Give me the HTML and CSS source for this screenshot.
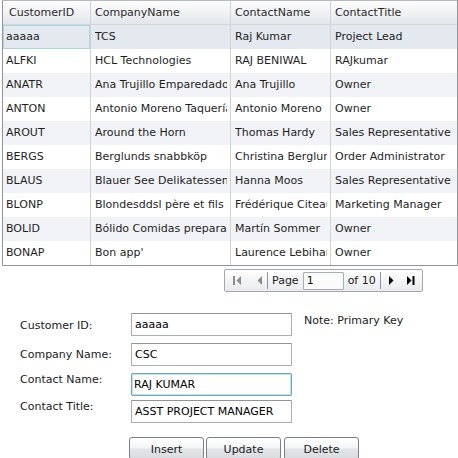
FILE: index.html
```html
<!DOCTYPE html>
<html>
<head>
<meta charset="utf-8">
<link rel="stylesheet" href="styles.css">
</head>
<body>
<div class="grid">
  <div class="row head"><div class="cell"><span class="t">CustomerID</span></div><div class="cell"><span class="t">CompanyName</span></div><div class="cell"><span class="t">ContactName</span></div><div class="cell"><span class="t">ContactTitle</span></div></div>
  <div class="row sel"><div class="cell focus"><span class="t">aaaaa</span></div><div class="cell"><span class="t">TCS</span></div><div class="cell"><span class="t">Raj Kumar</span></div><div class="cell"><span class="t">Project Lead</span></div></div>
  <div class="row"><div class="cell"><span class="t">ALFKI</span></div><div class="cell"><span class="t">HCL Technologies</span></div><div class="cell"><span class="t">RAJ BENIWAL</span></div><div class="cell"><span class="t">RAJkumar</span></div></div>
  <div class="row alt"><div class="cell"><span class="t">ANATR</span></div><div class="cell"><span class="t">Ana Trujillo Emparedados y helados</span></div><div class="cell"><span class="t">Ana Trujillo</span></div><div class="cell"><span class="t">Owner</span></div></div>
  <div class="row"><div class="cell"><span class="t">ANTON</span></div><div class="cell"><span class="t">Antonio Moreno Taquería</span></div><div class="cell"><span class="t">Antonio Moreno</span></div><div class="cell"><span class="t">Owner</span></div></div>
  <div class="row alt"><div class="cell"><span class="t">AROUT</span></div><div class="cell"><span class="t">Around the Horn</span></div><div class="cell"><span class="t">Thomas Hardy</span></div><div class="cell"><span class="t">Sales Representative</span></div></div>
  <div class="row"><div class="cell"><span class="t">BERGS</span></div><div class="cell"><span class="t">Berglunds snabbköp</span></div><div class="cell"><span class="t">Christina Berglund</span></div><div class="cell"><span class="t">Order Administrator</span></div></div>
  <div class="row alt"><div class="cell"><span class="t">BLAUS</span></div><div class="cell"><span class="t">Blauer See Delikatessen</span></div><div class="cell"><span class="t">Hanna Moos</span></div><div class="cell"><span class="t">Sales Representative</span></div></div>
  <div class="row"><div class="cell"><span class="t">BLONP</span></div><div class="cell"><span class="t">Blondesddsl père et fils</span></div><div class="cell"><span class="t">Frédérique Citeaux</span></div><div class="cell"><span class="t">Marketing Manager</span></div></div>
  <div class="row alt"><div class="cell"><span class="t">BOLID</span></div><div class="cell"><span class="t">Bólido Comidas preparadas</span></div><div class="cell"><span class="t">Martín Sommer</span></div><div class="cell"><span class="t">Owner</span></div></div>
  <div class="row"><div class="cell"><span class="t">BONAP</span></div><div class="cell"><span class="t">Bon app'</span></div><div class="cell"><span class="t">Laurence Lebihan</span></div><div class="cell"><span class="t">Owner</span></div></div>
</div>

<div class="pager">
  <svg class="ic first" width="9" height="9" viewBox="0 0 9 9"><rect x="0" y="0" width="2" height="9" fill="#8c8c8c"/><polygon points="8,0 8,9 3.5,4.5" fill="#8c8c8c"/></svg>
  <svg class="ic prev" width="5" height="9" viewBox="0 0 5 9"><polygon points="5,0 5,9 0.5,4.5" fill="#8c8c8c"/></svg>
  <span class="sep"></span>
  <span class="ptext">Page</span>
  <span class="pinput">1</span>
  <span class="ptext of">of 10</span>
  <span class="sep sep2"></span>
  <svg class="ic next" width="5" height="9" viewBox="0 0 5 9"><polygon points="0,0 0,9 4.5,4.5" fill="#000"/></svg>
  <svg class="ic last" width="8" height="9" viewBox="0 0 8 9"><polygon points="0,0 0,9 4.5,4.5" fill="#000"/><rect x="5.5" y="0" width="2" height="9" fill="#000"/></svg>
</div>

<div class="form">
  <div class="frow r1"><span class="label">Customer ID:</span><span class="input">aaaaa</span><span class="note">Note: Primary Key</span></div>
  <div class="frow r2"><span class="label">Company Name:</span><span class="input">CSC</span></div>
  <div class="frow r3"><span class="label">Contact Name:</span><span class="input focused">RAJ KUMAR</span></div>
  <div class="frow r4"><span class="label">Contact Title:</span><span class="input">ASST PROJECT MANAGER</span></div>
  <div class="buttons"><span class="btn">Insert</span><span class="btn">Update</span><span class="btn">Delete</span></div>
</div>
</body>
</html>
```

FILE: styles.css
```css
html, body {
  margin: 0;
  padding: 0;
  background: #ffffff;
  overflow: hidden;
}
body {
  font-family: "DejaVu Sans", Verdana, sans-serif;
  font-size: 11px;
  color: #1a1a1a;
  width: 458px;
  height: 458px;
}
.grid {
  margin-left: 2px;
  width: 456px;
  box-sizing: border-box;
  border: 1px solid #8f969e;
  border-top-color: #b5bac0;
}
.row {
  display: grid;
  grid-template-columns: 88px 140px 100px 126px;
  height: 24px;
  background: #ffffff;
}
.row.alt { background: #f1f3f6; }
.row.sel { background: #e4e9ef; }
.row.head {
  height: 24px;
  background: linear-gradient(#fdfdfd, #eef0f2 60%, #e3e6ea);
  border-bottom: 1px solid #d3d7dc;
  box-sizing: border-box;
}
.cell {
  box-sizing: border-box;
  border-right: 1px solid #cfd4d9;
  padding-left: 3px;
  padding-right: 3px;
  line-height: 24px;
  min-width: 0;
  color: #1e1e1e;
}
.t {
  display: block;
  white-space: nowrap;
  overflow: hidden;
}
.cell:last-child { border-right: none; padding-left: 4px; }
.head .cell {
  padding-left: 6px;
  line-height: 23px;
  color: #2a2a2a;
}
.head .cell:nth-child(n+2) { padding-left: 4px; }
.row .cell:nth-child(2), .row .cell:nth-child(3) { padding-left: 4px; }
.focus {
  box-shadow: inset 0 0 0 1px #a9d6e2;
}

.pager {
  margin-top: 3px;
  margin-left: 224px;
  width: 199px;
  height: 23px;
  box-sizing: border-box;
  border: 1px solid #a3a8ae;
  border-radius: 2px;
  background: linear-gradient(#ffffff, #f3f4f6 50%, #e9ebee);
  display: flex;
  align-items: center;
}
.ic { display: block; flex: none; }
.first { margin-left: 8px; }
.prev { margin-left: 15px; }
.sep {
  width: 1px;
  height: 17px;
  background: #8f959c;
  margin-left: 5px;
  flex: none;
}
.ptext { margin-left: 4px; color: #1a1a1a; white-space: nowrap; }
.pinput {
  margin-left: 4px;
  width: 41px;
  height: 18px;
  box-sizing: border-box;
  border: 1px solid #a7adb3;
  border-radius: 1px;
  background: #fbfbfb;
  line-height: 16px;
  padding-left: 3px;
  color: #111;
}
.of { margin-left: 4px; }
.sep2 { margin-left: 4px; }
.next { margin-left: 8px; }
.last { margin-left: 13px; }

.form {
  margin-top: 21px;
}
.frow {
  display: flex;
  align-items: flex-start;
  margin-left: 20px;
}
.label {
  width: 111px;
  flex: none;
  color: #1a1a1a;
  white-space: nowrap;
}
.r1 .label { padding-top: 6px; }
.r2 .label { padding-top: 5px; }
.r3 .label, .r4 .label { padding-top: 0px; }
.r2 { margin-top: 7px; }
.r3 { margin-top: 7px; }
.r4 { margin-top: 4px; }
.input {
  width: 161px;
  height: 23px;
  box-sizing: border-box;
  border: 1px solid #a9afb5;
  border-top-color: #8f959b;
  border-radius: 1px;
  background: #ffffff;
  line-height: 21px;
  padding-left: 3px;
  color: #000;
  white-space: nowrap;
  overflow: hidden;
  flex: none;
}
.input.focused {
  border-color: #6fa7bd;
  box-shadow: inset 0 0 0 1px #c4e2ec;
  padding-left: 2px;
}
.note {
  margin-left: 12px;
  padding-top: 1px;
  color: #1a1a1a;
  white-space: nowrap;
}
.buttons {
  margin-top: 14px;
  margin-left: 129px;
  display: flex;
  gap: 2px;
}
.btn {
  width: 75px;
  height: 23px;
  box-sizing: border-box;
  border: 1px solid #7b8188;
  border-radius: 3px;
  background: linear-gradient(#ffffff, #f4f5f6 45%, #e2e4e7 55%, #d9dcdf);
  text-align: center;
  line-height: 23px;
  color: #1a1a1a;
}
.btn:nth-child(3) { margin-left: 1px; }
```
